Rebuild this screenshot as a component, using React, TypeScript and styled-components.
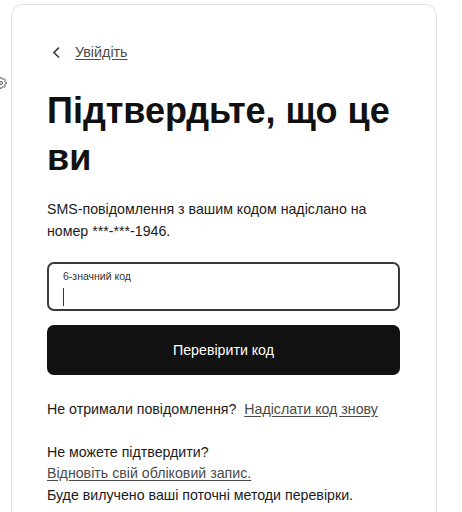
import { FC } from "react";
import styled, { createGlobalStyle } from "styled-components";

const GlobalStyle = createGlobalStyle`
  html, body {
    margin: 0;
    background: #ffffff;
    font-family: "Liberation Sans", Arial, sans-serif;
    color: #1b1b1b;
  }
`;

const Page = styled.div`
  position: relative;
  height: 512px;
  overflow: hidden;
  padding: 4px 0 0 11px;
  box-sizing: border-box;
`;

const SideGlyph = styled.div`
  position: absolute;
  left: -5px;
  top: 75px;
  color: #555;
`;

const Card = styled.div`
  width: 426px;
  min-height: 560px;
  box-sizing: border-box;
  border: 1px solid #dde2e8;
  border-radius: 12px;
  padding: 37px 36px 0 35px;
  display: flex;
  flex-direction: column;
`;

const BackRow = styled.div`
  display: flex;
  align-items: center;
  gap: 14px;
  height: 20px;
  padding-left: 5px;
  font-size: 14.3px;
`;

const Link = styled.a`
  color: #4a4a4a;
  text-decoration: underline;
  text-underline-offset: 2px;
  cursor: pointer;
`;

const Title = styled.h1`
  margin: 25px 0 0;
  font-size: 36px;
  line-height: 47px;
  font-weight: 700;
  color: #111;
`;

const Text = styled.p<{ $gap?: number }>`
  margin: ${(p) => p.$gap ?? 0}px 0 0;
  font-size: 14.2px;
  line-height: 21.5px;
`;

const Field = styled.label`
  margin-top: 20px;
  height: 49px;
  box-sizing: border-box;
  border: 2px solid #3a3a3a;
  border-radius: 7px;
  padding: 5px 14px 0;
  display: flex;
  flex-direction: column;
`;

const FieldLabel = styled.span`
  font-size: 10.5px;
  line-height: 14px;
  color: #333;
`;

const Caret = styled.span`
  margin-top: 5px;
  width: 1px;
  height: 18px;
  background: #333;
`;

const Button = styled.button`
  margin-top: 14px;
  height: 50px;
  border: none;
  border-radius: 7px;
  background: #111111;
  color: #ffffff;
  font-family: inherit;
  font-size: 14.2px;
`;

const Chevron: FC = () => (
  <svg width="9" height="13" viewBox="0 0 9 13" fill="none">
    <path d="M7 1.5L2 6.5L7 11.5" stroke="#333" strokeWidth="1.6" />
  </svg>
);

const Gear: FC = () => (
  <svg width="12" height="12" viewBox="0 0 24 24" fill="none" stroke="currentColor" strokeWidth="2">
    <circle cx="12" cy="12" r="3" />
    <path d="M19.4 15a1.65 1.65 0 0 0 .33 1.82l.06.06a2 2 0 1 1-2.83 2.83l-.06-.06a1.65 1.65 0 0 0-1.82-.33 1.65 1.65 0 0 0-1 1.51V21a2 2 0 1 1-4 0v-.09a1.65 1.65 0 0 0-1-1.51 1.65 1.65 0 0 0-1.82.33l-.06.06a2 2 0 1 1-2.83-2.83l.06-.06A1.65 1.65 0 0 0 4.6 15a1.65 1.65 0 0 0-1.51-1H3a2 2 0 1 1 0-4h.09A1.65 1.65 0 0 0 4.6 9a1.65 1.65 0 0 0-.33-1.82l-.06-.06a2 2 0 1 1 2.83-2.83l.06.06A1.65 1.65 0 0 0 9 4.6a1.65 1.65 0 0 0 1-1.51V3a2 2 0 1 1 4 0v.09a1.65 1.65 0 0 0 1 1.51 1.65 1.65 0 0 0 1.82-.33l.06-.06a2 2 0 1 1 2.83 2.83l-.06.06A1.65 1.65 0 0 0 19.4 9a1.65 1.65 0 0 0 1.51 1H21a2 2 0 1 1 0 4h-.09a1.65 1.65 0 0 0-1.51 1z" />
  </svg>
);

const App: FC = () => (
  <>
    <GlobalStyle />
    <Page>
      <SideGlyph>
        <Gear />
      </SideGlyph>
      <Card>
        <BackRow>
          <Chevron />
          <Link>Увійдіть</Link>
        </BackRow>
        <Title>Підтвердьте, що це ви</Title>
        <Text $gap={18}>
          SMS-повідомлення з вашим кодом надіслано на номер ***-***-1946.
        </Text>
        <Field>
          <FieldLabel>6-значний код</FieldLabel>
          <Caret />
        </Field>
        <Button>Перевірити код</Button>
        <Text $gap={24}>
          Не отримали повідомлення?&nbsp;&nbsp;<Link>Надіслати код знову</Link>
        </Text>
        <Text $gap={21}>Не можете підтвердити?</Text>
        <Text>
          <Link>Відновіть свій обліковий запис.</Link>
        </Text>
        <Text>Буде вилучено ваші поточні методи перевірки.</Text>
      </Card>
    </Page>
  </>
);

export default App;
